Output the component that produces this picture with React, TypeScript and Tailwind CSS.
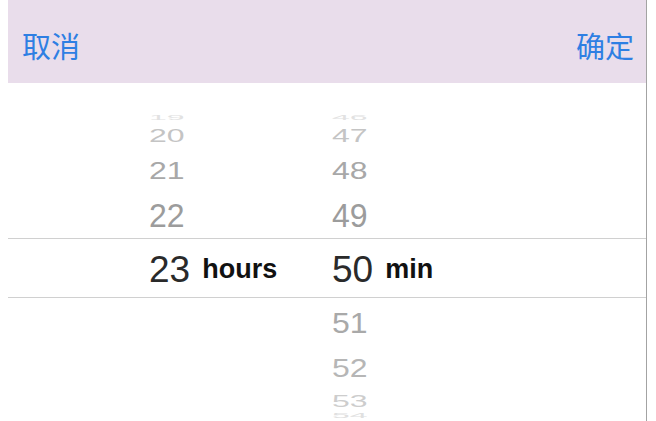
import React from "react";

type Item = { v: string; h: number; mt: number; s: number; c: string };

const hours: Item[] = [
  { v: "19", h: 10, mt: 30, s: 0.2, c: "#e2e2e2" },
  { v: "20", h: 20, mt: 3, s: 0.57, c: "#c4c4c4" },
  { v: "21", h: 30, mt: 10, s: 0.74, c: "#a8a8a8" },
  { v: "22", h: 36, mt: 11, s: 1.05, c: "#9c9c9c" },
];

const minsTop: Item[] = [
  { v: "46", h: 10, mt: 30, s: 0.2, c: "#e2e2e2" },
  { v: "47", h: 20, mt: 3, s: 0.57, c: "#c4c4c4" },
  { v: "48", h: 30, mt: 10, s: 0.74, c: "#a8a8a8" },
  { v: "49", h: 36, mt: 11, s: 1.05, c: "#9c9c9c" },
];

const minsBottom: Item[] = [
  { v: "51", h: 30, mt: 18, s: 0.91, c: "#a9a9a9" },
  { v: "52", h: 30, mt: 15, s: 0.83, c: "#b6b6b6" },
  { v: "53", h: 16, mt: 10, s: 0.52, c: "#cdcdcd" },
  { v: "54", h: 8, mt: 3, s: 0.22, c: "#e0e0e0" },
];

const font = { fontFamily: '"Liberation Sans", Arial, sans-serif' };

function Num({ it }: { it: Item }) {
  return (
    <div
      className="text-[32px] whitespace-nowrap"
      style={{ height: it.h, lineHeight: `${it.h}px`, marginTop: it.mt, color: it.c }}
    >
      <span className="inline-block" style={{ transform: `scaleY(${it.s})`, transformOrigin: "center" }}>
        {it.v}
      </span>
    </div>
  );
}

function Selected({ num, label }: { num: string; label: string }) {
  return (
    <div className="mt-[17px] flex h-[40px] items-center whitespace-nowrap">
      <span className="text-[37px] leading-[40px] text-[#2a2a2a]">{num}</span>
      <span className="ml-3 -translate-y-[1px] text-[27px] font-bold leading-[40px] text-[#111]">{label}</span>
    </div>
  );
}

export default function App() {
  return (
    <div className="flex h-[421px] w-[656px] bg-white" style={font}>
      <div className="ml-2 flex w-[639px] flex-col border-r border-[#a3a3a3]">
        <div
          className="flex h-[83px] shrink-0 items-center justify-between bg-[#e9ddeb] pl-[14px] pr-[12px] pt-[8px] text-[29px] text-[#2e7fe3]"
          style={{ fontFamily: '"Noto Sans CJK SC", "Noto Sans", sans-serif' }}
        >
          <span className="leading-none">取消</span>
          <span className="leading-none">确定</span>
        </div>
        <div className="relative flex flex-1 overflow-hidden">
          <div className="absolute inset-x-0 top-[155px] h-[60px] border-y border-[#d0d0d0]" />
          <div className="w-[141px] shrink-0" />
          <div className="flex w-[183px] shrink-0 flex-col">
            {hours.map((it) => (
              <Num key={it.v} it={it} />
            ))}
            <Selected num="23" label="hours" />
          </div>
          <div className="flex flex-1 flex-col">
            {minsTop.map((it) => (
              <Num key={it.v} it={it} />
            ))}
            <Selected num="50" label="min" />
            {minsBottom.map((it) => (
              <Num key={it.v} it={it} />
            ))}
          </div>
        </div>
      </div>
    </div>
  );
}
